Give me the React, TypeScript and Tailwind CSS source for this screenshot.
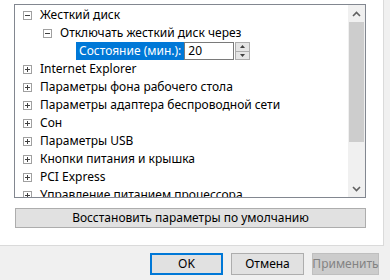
import React from 'react';

const font = { fontFamily: '"Noto Sans", "Liberation Sans", sans-serif' };

function Expander({ open }: { open: boolean }) {
  return (
    <svg width="9" height="9" viewBox="0 0 9 9" className="shrink-0">
      <rect x="0.5" y="0.5" width="8" height="8" fill="#fff" stroke="#a0a0a0" />
      <path d="M2 4.5h5" stroke="#404040" strokeWidth="1" />
      {!open && <path d="M4.5 2v5" stroke="#404040" strokeWidth="1" />}
    </svg>
  );
}

type Row = { label: string; level: number; open?: boolean };

const rows: Row[] = [
  { label: 'Internet Explorer', level: 0 },
  { label: 'Параметры фона рабочего стола', level: 0 },
  { label: 'Параметры адаптера беспроводной сети', level: 0 },
  { label: 'Сон', level: 0 },
  { label: 'Параметры USB', level: 0 },
  { label: 'Кнопки питания и крышка', level: 0 },
  { label: 'PCI Express', level: 0 },
  { label: 'Управление питанием процессора', level: 0 },
];

function TreeRow({ label, level, open = false }: Row) {
  return (
    <div className={`flex h-[18px] shrink-0 items-center gap-[8px] ${level === 0 ? 'pl-[8px]' : 'pl-[28px]'}`}>
      <Expander open={open} />
      <span className="whitespace-nowrap text-[12px] leading-none text-black">{label}</span>
    </div>
  );
}

export default function App() {
  return (
    <div className="flex h-[280px] w-[390px] flex-col bg-[#f0f0f0]" style={font}>
      {/* tab page */}
      <div className="flex h-[246px] w-[384px] flex-col border-b border-r border-[#dadada] bg-white pl-[14px] pt-[4px]">
        {/* tree list */}
        <div className="flex h-[194px] w-[352px] border border-[#828790] bg-white">
          <div className="flex flex-1 flex-col overflow-hidden pt-[1px]">
            <TreeRow label="Жесткий диск" level={0} open />
            <TreeRow label="Отключать жесткий диск через" level={1} open />
            <div className="flex h-[18px] shrink-0 items-center pl-[61px]">
              <div className="flex h-[18px] items-center bg-[#0078d7] px-[3px] text-[12px] leading-none text-white">
                Состояние (мин.):
              </div>
              <div className="flex h-[18px] w-[50px] items-center border border-[#7a7a7a] bg-white pl-[3px] text-[12px] leading-none text-black">
                20
              </div>
              <div className="ml-[1px] flex h-[18px] w-[15px] flex-col border border-[#adadad] bg-[#e5e5e5]">
                <div className="flex flex-1 items-center justify-center border-b border-[#adadad]">
                  <svg width="5" height="3" viewBox="0 0 5 3"><path d="M2.5 0L5 3H0z" fill="#404040" /></svg>
                </div>
                <div className="flex flex-1 items-center justify-center">
                  <svg width="5" height="3" viewBox="0 0 5 3"><path d="M0 0h5L2.5 3z" fill="#404040" /></svg>
                </div>
              </div>
            </div>
            {rows.map((r) => (
              <TreeRow key={r.label} {...r} />
            ))}
          </div>
          {/* scrollbar */}
          <div className="flex w-[17px] shrink-0 flex-col bg-[#f0f0f0]">
            <div className="flex h-[17px] items-center justify-center">
              <svg width="9" height="6" viewBox="0 0 9 6"><path d="M1 5l3.5-3.5L8 5" fill="none" stroke="#606060" strokeWidth="1.6" /></svg>
            </div>
            <div className="mx-[1px] h-[120px] bg-[#cdcdcd]" />
            <div className="flex-1" />
            <div className="flex h-[17px] items-center justify-center">
              <svg width="9" height="6" viewBox="0 0 9 6"><path d="M1 1l3.5 3.5L8 1" fill="none" stroke="#606060" strokeWidth="1.6" /></svg>
            </div>
          </div>
        </div>
        <button className="ml-[1px] mt-[10px] flex h-[20px] w-[351px] items-center justify-center border border-[#adadad] bg-[#e1e1e1] text-[12px] leading-none text-black">
          Восстановить параметры по умолчанию
        </button>
      </div>
      {/* dialog buttons */}
      <div className="mt-[7px] flex pl-[150px]">
        <button className="flex h-[22px] w-[73px] items-center justify-center border-2 border-[#0078d7] bg-[#e1e1e1] text-[12px] leading-none text-black">
          OK
        </button>
        <button className="ml-[8px] flex h-[22px] w-[73px] items-center justify-center border border-[#adadad] bg-[#e1e1e1] text-[12px] leading-none text-black">
          Отмена
        </button>
        <button className="ml-[8px] flex h-[22px] w-[67px] items-center justify-center border border-[#bfbfbf] bg-[#cccccc] text-[12px] leading-none text-[#838383]">
          Применить
        </button>
      </div>
    </div>
  );
}
